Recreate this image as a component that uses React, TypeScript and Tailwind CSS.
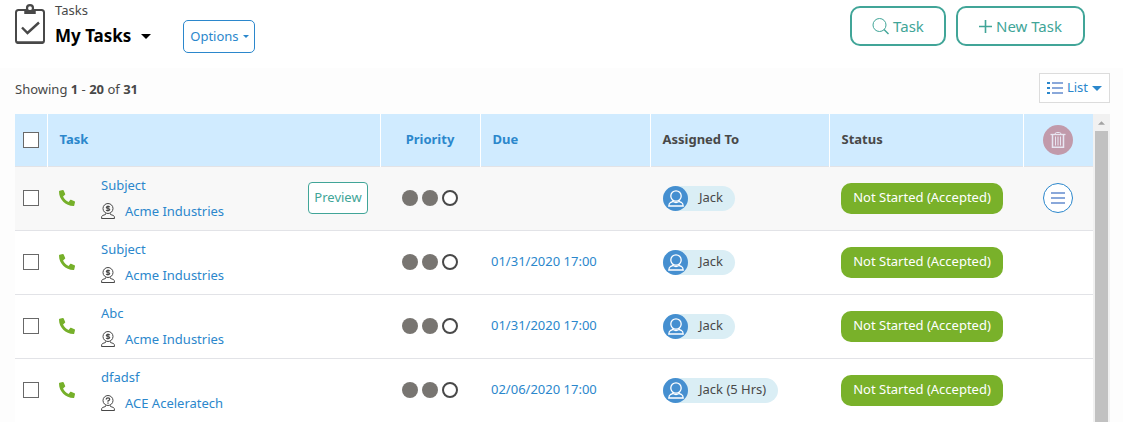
import React from 'react';

interface Task {
    id: number;
    subject: string;
    account: string;
    accountType: '$' | '?';
    due: string;
    assignee: string;
    status: string;
}

const TASKS: Task[] = [
    { id: 1, subject: 'Subject', account: 'Acme Industries', accountType: '$', due: '', assignee: 'Jack', status: 'Not Started (Accepted)' },
    { id: 2, subject: 'Subject', account: 'Acme Industries', accountType: '$', due: '01/31/2020 17:00', assignee: 'Jack', status: 'Not Started (Accepted)' },
    { id: 3, subject: 'Abc', account: 'Acme Industries', accountType: '$', due: '01/31/2020 17:00', assignee: 'Jack', status: 'Not Started (Accepted)' },
    { id: 4, subject: 'dfadsf', account: 'ACE Aceleratech', accountType: '?', due: '02/06/2020 17:00', assignee: 'Jack (5 Hrs)', status: 'Not Started (Accepted)' },
];

const ClipboardIcon = () => (
    <svg className="w-[30px] h-10 shrink-0" viewBox="0 0 30 40" fill="none" stroke="#484848" strokeWidth="2">
        <rect x="1" y="6" width="28" height="33" rx="2.500" />
        <path d="M2 38.500h26" strokeWidth="2.500" />
        <path d="M9.500 10V5.500h3a2.700 2.700 0 0 1 5 0h3V10z" fill="#484848" stroke="none" />
        <circle cx="15" cy="4.200" r="3" fill="#fff" strokeWidth="2.200" />
        <path d="M9.500 10V6h11v4z" fill="#484848" stroke="none" />
        <path d="M7 23.500l5.500 5.500L24 18.500" strokeWidth="2.400" />
    </svg>
);

const CaretDown = ({ className }: { className: string }) => (
    <svg className={className} viewBox="0 0 10 5" fill="currentColor">
        <path d="M0 0h10L5 5z" />
    </svg>
);

const SearchIcon = () => (
    <svg className="w-[17px] h-[17px]" viewBox="0 0 17 17" fill="none" stroke="currentColor" strokeWidth="1">
        <circle cx="7.500" cy="7" r="6.500" />
        <path d="M12 11.500l4.500 4.500" strokeWidth="1.400" />
    </svg>
);

const PlusIcon = () => (
    <svg className="w-[13px] h-[13px]" viewBox="0 0 13 13" stroke="currentColor" strokeWidth="1.600">
        <path d="M6.500 0v13M0 6.500h13" />
    </svg>
);

const ListIcon = () => (
    <svg className="w-4 h-3" viewBox="0 0 16 12">
        <path d="M0 1h3M0 6h3M0 11h3" stroke="#2b87cc" strokeWidth="2" />
        <path d="M5 1h11M5 6h11M5 11h11" stroke="#8aa8da" strokeWidth="2" />
    </svg>
);

const PhoneIcon = () => (
    <svg className="w-4 h-4 -scale-x-100" viewBox="0 0 512 512" fill="#76b02a">
        <path d="M493.400 24.600l-104-24c-11.300-2.600-22.900 3.300-27.500 13.900l-48 112c-4.200 9.800-1.400 21.300 6.900 28l60.600 49.600c-36 76.700-98.900 140.500-177.200 177.200l-49.600-60.600c-6.800-8.300-18.200-11.100-28-6.900l-112 48C3.900 366.500-2 378.100.6 389.400l24 104C27.100 504.200 36.700 512 48 512c256.100 0 464-207.500 464-464 0-11.200-7.700-20.900-18.600-23.400z" transform="translate(0 0)" />
    </svg>
);

const AccountIcon = ({ type }: { type: '$' | '?' }) => (
    <svg className="w-[14px] h-4 shrink-0" viewBox="0 0 14 16" fill="none" stroke="#484848">
        <circle cx="7" cy="5.500" r="5" />
        <path d="M4.500 10.500v1L1.500 12.500Q.5 13 .5 15.500h13q0-2.500-1-3l-3-1v-1" />
        {type === '$' ? (
            <path d="M8.800 4.200Q8.200 3.400 7 3.400T5.300 4.400Q5.300 5.300 7 5.500T8.800 6.700Q8.600 7.700 7 7.700T5.200 6.800M7 2.500v6" strokeWidth="1.100" />
        ) : (
            <path d="M5.300 4.500Q5.300 2.900 7 2.900T8.700 4.300Q8.700 5.200 7 6v.7M7 7.500v1.200" strokeWidth="1.300" />
        )}
    </svg>
);

const UserIcon = () => (
    <svg className="w-4 h-[17px]" viewBox="0 0 16 17" fill="none" stroke="#fff" strokeWidth="1.300">
        <circle cx="8" cy="6" r="5.200" />
        <path d="M5 10.500Q5 12 2.500 12.500Q1 13.200.8 16h14.400q-.2-2.800-1.700-3.500Q11 12 11 10.500M5 11.500q3 2 6 0" />
    </svg>
);

const TrashIcon = () => (
    <svg className="w-4 h-4" viewBox="0 0 16 16" fill="none" stroke="#e8e6f2">
        <path d="M5 2.500q0-2 1.500-2h3q1.500 0 1.500 2" />
        <path d="M.5 2.500h15" strokeWidth="1.300" />
        <path d="M2.500 3v12.300h11V3" strokeWidth="1.500" />
        <path d="M5.500 4.500v9M8 4.500v9M10.500 4.500v9" />
    </svg>
);

const PriorityDots = () => (
    <div className="flex items-center justify-center gap-1" role="img" aria-label="Priority 2 of 3">
        <span className="w-4 h-4 rounded-full bg-[#787571]" />
        <span className="w-4 h-4 rounded-full bg-[#787571]" />
        <span className="w-4 h-4 rounded-full border-2 border-[#484848] bg-white" />
    </div>
);

const Checkbox = ({ label }: { label: string }) => (
    <input type="checkbox" aria-label={label} className="block mx-auto w-4 h-4 appearance-none bg-white border border-[#686868] checked:bg-[#2b87cc]" />
);

const TaskRow = ({ task, active }: { task: Task; active: boolean }) => (
    <tr className={active ? 'h-16 border-b border-[#e2e3e7] bg-[#f8f8f8]' : 'h-16 border-b border-[#e2e3e7] bg-white'}>
        <td><Checkbox label={`Select ${task.subject}`} /></td>
        <td className="px-3">
            <div className="flex items-center">
                <PhoneIcon />
                <div className="ml-[26px] grow">
                    <a href="#" className="block leading-[26px]">{task.subject}</a>
                    <div className="flex items-center gap-[10px] leading-[26px]">
                        <AccountIcon type={task.accountType} />
                        <a href="#">{task.account}</a>
                    </div>
                </div>
                {active && (
                    <button className="h-8 w-[60px] rounded-[4px] border border-[#41a598] bg-white text-[#41a598]">Preview</button>
                )}
            </div>
        </td>
        <td><PriorityDots /></td>
        <td className="pl-[11px]">{task.due && <a href="#">{task.due}</a>}</td>
        <td className="pl-[13px]">
            <div className="inline-flex items-center h-[25px] rounded-full bg-[#daeef5] pr-3 text-[#484848] align-middle">
                <span className="flex items-center justify-center w-[25px] h-[25px] mr-[11px] rounded-full bg-[#458fd0]">
                    <UserIcon />
                </span>
                {task.assignee}
            </div>
        </td>
        <td className="pl-3">
            <span className="inline-flex items-center justify-center h-[31px] w-[162px] rounded-[10px] bg-[#79b12a] text-white align-middle">{task.status}</span>
        </td>
        <td>
            {active && (
                <button aria-label="Row actions" className="mx-auto flex items-center justify-center w-[30px] h-[30px] rounded-full border border-[#2b87cc] bg-white">
                    <svg className="w-[14px] h-3" viewBox="0 0 14 12" stroke="#8aa8da" strokeWidth="2">
                        <path d="M0 1h14M0 6h14M0 11h14" />
                    </svg>
                </button>
            )}
        </td>
    </tr>
);

const App: React.FC = () => {
    return (
        <div className="h-screen overflow-hidden flex flex-col bg-[#fdfdfd] font-['Noto_Sans',sans-serif] text-[13px] text-[#484848]">
            <header className="h-[68px] shrink-0 flex items-start bg-white pl-[15px] pr-[38px]">
                <div className="pt-1"><ClipboardIcon /></div>
                <div className="ml-[10px]">
                    <div className="leading-5">Tasks</div>
                    <button className="flex items-center gap-[10px] text-[17px] leading-8 font-bold text-black">
                        <h1>My Tasks</h1>
                        <CaretDown className="w-[10px] h-[5px]" />
                    </button>
                </div>
                <button className="mt-5 ml-8 h-[33px] w-[72px] flex items-center justify-center gap-1 rounded-[5px] border border-[#2b87cc] text-[#2b87cc]">
                    Options
                    <CaretDown className="w-[6px] h-[3px]" />
                </button>
                <div className="ml-auto mt-[6px] flex gap-[10px] text-[15px] text-[#41a598]">
                    <button className="h-10 w-24 flex items-center justify-center gap-1 rounded-[10px] border-2 border-[#41a598]">
                        <SearchIcon />
                        Task
                    </button>
                    <button className="h-10 w-[129px] flex items-center justify-center gap-1 rounded-[10px] border-2 border-[#41a598]">
                        <PlusIcon />
                        New Task
                    </button>
                </div>
            </header>

            <main className="grow min-h-0 flex flex-col pl-[15px] pr-[13px]">
                <div className="h-[46px] shrink-0 flex items-start justify-between pt-[5px]">
                    <p className="leading-8">Showing <b>1</b> - <b>20</b> of <b>31</b></p>
                    <button className="h-[30px] w-[71px] flex items-center justify-center gap-1 border border-[#dcdcdc] bg-white text-[#2b87cc]">
                        <ListIcon />
                        List
                        <CaretDown className="w-[10px] h-[5px]" />
                    </button>
                </div>

                <div className="grow min-h-0 flex overflow-hidden">
                    <table className="grow self-start table-fixed border-collapse text-left text-[#2b87cc]">
                        <colgroup>
                            <col className="w-8" />
                            <col />
                            <col className="w-[100px]" />
                            <col className="w-[170px]" />
                            <col className="w-[179px]" />
                            <col className="w-[194px]" />
                            <col className="w-[70px]" />
                        </colgroup>
                        <thead>
                            <tr className="h-[52px] bg-[#d0ebff] border-b border-[#e2e3e7]">
                                <th className="border-r border-r-white"><Checkbox label="Select all tasks" /></th>
                                <th className="pl-3 border-r border-r-white">Task</th>
                                <th className="text-center border-r border-r-white">Priority</th>
                                <th className="pl-3 border-r border-r-white">Due</th>
                                <th className="pl-3 border-r border-r-white text-[#484848]">Assigned To</th>
                                <th className="pl-3 border-r border-r-white text-[#484848]">Status</th>
                                <th>
                                    <button aria-label="Delete selected" className="mx-auto flex items-center justify-center w-[30px] h-[30px] rounded-full bg-[#c19aab]">
                                        <TrashIcon />
                                    </button>
                                </th>
                            </tr>
                        </thead>
                        <tbody>
                            {TASKS.map((task, i) => (
                                <TaskRow key={task.id} task={task} active={i === 0} />
                            ))}
                        </tbody>
                    </table>
                    {/* scroll track */}
                    <div className="w-[17px] shrink-0 flex flex-col items-center bg-[#f1f1f1]">
                        <div className="h-[17px] flex items-center text-[#a3a3a3]">
                            <CaretDown className="w-[7px] h-1 rotate-180" />
                        </div>
                        <div className="grow w-[13px] bg-[#c1c1c1]" />
                    </div>
                </div>
            </main>
        </div>
    );
};

export default App;
